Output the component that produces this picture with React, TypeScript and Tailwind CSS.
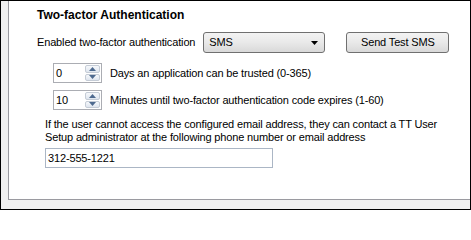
const font = { fontFamily: '"Liberation Sans", Arial, sans-serif' };

function Spinner({ value }: { value: string }) {
  return (
    <div className="flex h-[20px] w-[49px] items-stretch border border-[#abadb3] bg-white">
      <div className="flex-1 pl-[2px] leading-[18px]">{value}</div>
      <div className="flex w-[16px] flex-col gap-px py-px pr-px">
        <div className="flex flex-1 items-center justify-center rounded-[2px] border border-[#c5ccd6] bg-gradient-to-b from-[#f6f8fb] to-[#dfe6ef]">
          <svg width="7" height="4" viewBox="0 0 7 4">
            <path d="M0 4 L3.5 0 L7 4 Z" fill="#4e6a8f" />
          </svg>
        </div>
        <div className="flex flex-1 items-center justify-center rounded-[2px] border border-[#c5ccd6] bg-gradient-to-b from-[#f6f8fb] to-[#dfe6ef]">
          <svg width="7" height="4" viewBox="0 0 7 4">
            <path d="M0 0 L3.5 4 L7 0 Z" fill="#4e6a8f" />
          </svg>
        </div>
      </div>
    </div>
  );
}

export default function App() {
  return (
    <div
      className="h-[210px] w-[471px] border border-black bg-[#f0f0f0] text-[11px] tracking-[-0.15px] text-black"
      style={font}
    >
      <div className="ml-[7px] h-[199px] border-b border-l border-[#9a9aa0] bg-white pl-[28px] pt-[7px]">
        <h2 className="text-[12px] font-bold leading-[14px] tracking-normal">Two-factor Authentication</h2>

        <div className="mt-[10px] flex h-[21px] items-center">
          <span>Enabled two-factor authentication</span>
          <div className="ml-[8px] flex h-[21px] w-[122px] items-center justify-between rounded-[3px] border border-[#707070] bg-gradient-to-b from-[#f3f3f3] via-[#e9e9e9] to-[#d9d9d9] pl-[5px] pr-[6px]">
            <span>SMS</span>
            <svg width="7" height="4" viewBox="0 0 7 4">
              <path d="M0 0 L7 0 L3.5 4 Z" fill="#000" />
            </svg>
          </div>
          <button className="ml-[21px] h-[21px] w-[103px] rounded-[3px] border border-[#707070] bg-gradient-to-b from-[#f3f3f3] via-[#e9e9e9] to-[#d9d9d9] text-[11px]">
            Send Test SMS
          </button>
        </div>

        <div className="ml-[16px] mt-[10px] flex items-center gap-[8px]">
          <Spinner value="0" />
          <span>Days an application can be trusted (0-365)</span>
        </div>
        <div className="ml-[16px] mt-[7px] flex items-center gap-[8px]">
          <Spinner value="10" />
          <span>Minutes until two-factor authentication code expires (1-60)</span>
        </div>

        <p className="ml-[8px] mt-[8px] leading-[13px]">
          If the user cannot access the configured email address, they can contact a TT User
          <br />
          Setup administrator at the following phone number or email address
        </p>
        <input
          className="ml-[8px] mt-[4px] block h-[20px] w-[228px] border border-[#abb6c5] bg-white px-[2px] text-[11px] outline-none"
          defaultValue="312-555-1221"
        />
      </div>
    </div>
  );
}
